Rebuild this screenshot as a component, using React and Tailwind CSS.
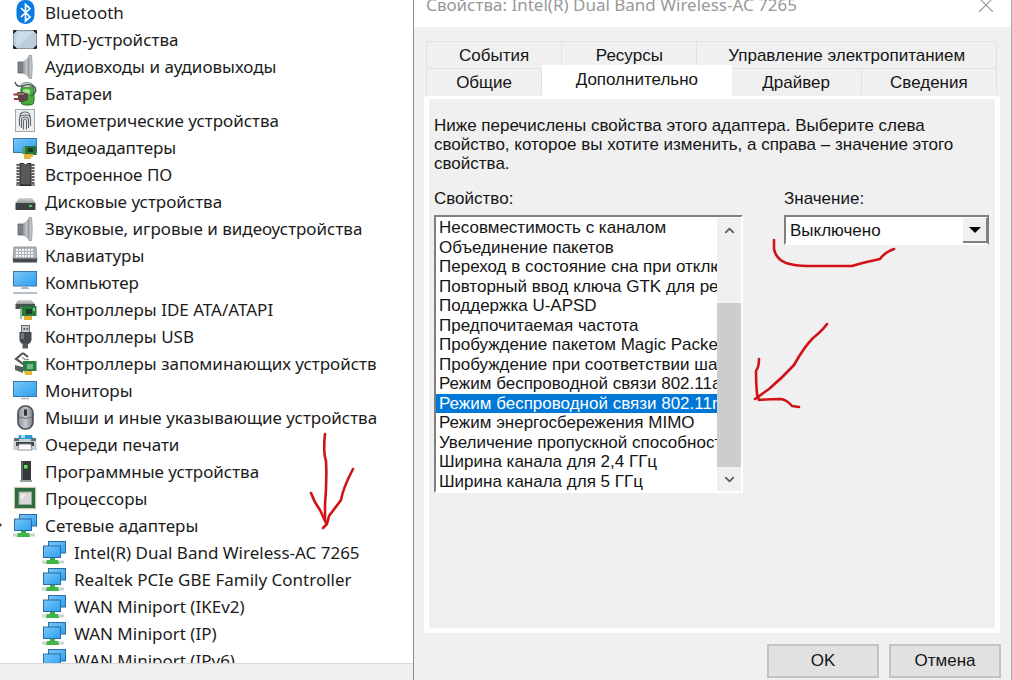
import { useState } from 'react';
import { X, ChevronUp, ChevronDown } from 'lucide-react';

// Shared gradients, referenced by the icons below
function IconDefs() {
  return (
    <svg className="absolute h-0 w-0" aria-hidden="true">
      <defs>
        <linearGradient id="screen" x1="0" y1="0" x2="1" y2="1">
          <stop offset="0" stopColor="#7cc8f7" />
          <stop offset="0.5" stopColor="#52b3f4" />
          <stop offset="1" stopColor="#2f9ff0" />
        </linearGradient>
        <linearGradient id="metal" x1="0" y1="0" x2="1" y2="0">
          <stop offset="0" stopColor="#8d9499" />
          <stop offset="0.5" stopColor="#c3c9cd" />
          <stop offset="1" stopColor="#7b8287" />
        </linearGradient>
        <linearGradient id="drive" x1="0" y1="0" x2="0" y2="1">
          <stop offset="0" stopColor="#d4d6d6" />
          <stop offset="1" stopColor="#999d9d" />
        </linearGradient>
      </defs>
    </svg>
  );
}

function Icon({ children }) {
  return (
    <svg viewBox="0 0 24 24" className="h-6 w-6 shrink-0 overflow-visible" aria-hidden="true">
      {children}
    </svg>
  );
}

function BluetoothIcon() {
  return (
    <Icon>
      <rect x="3.5" y="-1" width="18" height="24" rx="8.5" fill="#0a7be0" />
      <path d="M8 7 L17 16 L12.5 20 V3.5 L17 7.5 L8 16" fill="none" stroke="#fff" strokeWidth="1.7" />
    </Icon>
  );
}

function MtdIcon() {
  return (
    <Icon>
      <rect x="0.5" y="2.5" width="23" height="18" rx="1.5" fill="#bccddb" stroke="#8b969f" />
      <path d="M0.5 2.5 h3 l-3 3z M23.5 2.5 h-3 l3 3z M0.5 20.5 h3 l-3 -3z M23.5 20.5 h-3 l3 -3z" fill="#20282e" stroke="#20282e" />
      <path d="M5 4 H20 L5 18 L3 16 V7z" fill="#cbdbe7" />
    </Icon>
  );
}

function SpeakerIcon() {
  return (
    <Icon>
      <path d="M5 7 h6 v11 H5z" fill="#7c8287" stroke="#5d6266" strokeWidth="0.8" />
      <path d="M10 7 L17 0.5 V23.5 L10 18z" fill="url(#metal)" />
      <path d="M16 0.5 h2.5 q1.5 11 0 23 h-2.5z" fill="#c3c7ca" stroke="#8d9397" strokeWidth="0.8" />
    </Icon>
  );
}

function BatteryIcon() {
  return (
    <Icon>
      <rect x="8" y="3" width="13" height="20" rx="4" fill="#48ad3e" stroke="#276d26" />
      <ellipse cx="14" cy="3" rx="5.5" ry="2.5" fill="#d6dfd5" stroke="#677067" strokeWidth="0.8" />
      <path d="M10 8 q3 -2 7 0 v4 q-4 -2 -7 0z" fill="#a5e397" />
      <path d="M2 0 q1 5 7 4 q8 -3 13 1 q3 5 -4 9" fill="none" stroke="#4c5355" strokeWidth="1.3" />
      <path d="M0.5 12.5 h6 M1 17 h6" stroke="#a8302b" strokeWidth="1.8" />
      <path d="M4 10 h6 l5 2 v6 l-5 2 H6z" fill="#5e4646" />
      <path d="M5 12 h6" stroke="#b1817d" strokeWidth="1.5" />
    </Icon>
  );
}

function FingerprintIcon() {
  return (
    <Icon>
      <rect x="2.5" y="0.5" width="19" height="22" fill="#ecefef" stroke="#a2a8ab" />
      <g fill="none" stroke="#5e6568" strokeWidth="1.1">
        <path d="M7 8 q0 -5 5 -5 q5 0 5 5" />
        <path d="M6.5 17 V10 q0 -4 5.5 -4 q5.5 0 5.5 4 v7" />
        <path d="M8.5 19 V11 q0 -3 3.5 -3 q3.5 0 3.5 3 v8" />
        <path d="M10.5 20.5 V12 q0 -2 1.5 -2 q1.5 0 1.5 2 v8.5" />
      </g>
    </Icon>
  );
}

function DisplayAdapterIcon() {
  return (
    <Icon>
      <rect x="0.5" y="2.5" width="23" height="14" fill="url(#screen)" stroke="#3878a8" />
      <path d="M12 10 h11.5 v9 H12z" fill="#27753b" />
      <path d="M15 12 h5 v4 h-5z" fill="#173e23" />
      <path d="M9 12 l3 -2 v8 h-3z" fill="#5f9c72" />
      <path d="M11 18 h9 v3 h-2 v2 h-7z" fill="#e5b63a" />
    </Icon>
  );
}

function FirmwareIcon() {
  return (
    <Icon>
      <rect x="3" y="0" width="19" height="23" fill="#f0f0f0" />
      <path
        d="M3.5 2 h3 M3.5 5 h3 M3.5 8 h3 M3.5 11 h3 M3.5 14 h3 M3.5 17 h3 M3.5 20 h3 M18.5 2 h3 M18.5 5 h3 M18.5 8 h3 M18.5 11 h3 M18.5 14 h3 M18.5 17 h3 M18.5 20 h3"
        stroke="#2d2d2d"
        strokeWidth="1.5"
      />
      <path d="M7 0.5 h3 q2.5 3 5 0 h3 v22 H7z" fill="#57595a" stroke="#252626" />
      <path d="M3 22 h19" stroke="#2d2d2d" />
    </Icon>
  );
}

function DiskIcon() {
  return (
    <Icon>
      <path d="M6 8 H19 L22.5 13 H2.5z" fill="url(#drive)" />
      <rect x="2.5" y="13" width="20" height="7" rx="0.5" fill="#3c4143" />
      <rect x="16" y="15" width="3" height="2" fill="#45d069" />
    </Icon>
  );
}

function KeyboardIcon() {
  return (
    <Icon>
      <path d="M1 3 H23 L24 16 H0z" fill="#aeb5bb" stroke="#858c92" strokeWidth="0.8" />
      <path d="M3 6 H21 M3 9 H21 M3 12 H21" stroke="#f2f5f6" strokeWidth="1.8" strokeDasharray="2 1" />
      <rect x="0" y="14.5" width="24" height="4" fill="#454b50" />
    </Icon>
  );
}

function ComputerIcon() {
  return (
    <Icon>
      <rect x="0.5" y="0.5" width="23" height="14.5" fill="url(#screen)" stroke="#3878a8" />
      <path d="M9 16 h6 l1.5 2 h-9z" fill="#aeb9c0" />
      <path d="M0 22 H24" stroke="#9fadb8" strokeWidth="1.5" />
    </Icon>
  );
}

function IdeIcon() {
  return (
    <Icon>
      <path d="M5 2 H18 L22 6 H2.5z" fill="url(#drive)" />
      <path d="M2.5 6 H22 V11 H2.5z" fill="#4b5051" />
      <path d="M9 8 h14.5 v10 H9z" fill="#277b3c" />
      <path d="M13 11 h6 v5 h-6z" fill="#1b3e28" />
      <path d="M20 10 h2 v3 h-2z" fill="#84c990" />
      <path d="M8 9 v12" stroke="#78a284" strokeWidth="1.5" />
      <path d="M11 18 h8 v4 h-8z" fill="#e5ae35" />
    </Icon>
  );
}

function UsbIcon() {
  return (
    <Icon>
      <rect x="8.5" y="0.5" width="8" height="8" fill="#c6cacc" stroke="#697174" />
      <path d="M10.5 3 h1.5 v2 h-1.5z M13.5 3 h1.5 v2 h-1.5z" fill="#555" />
      <path d="M6.5 7 h12 v8 q-1 4 -4 4 h-4 q-3 0 -4 -4z" fill="#454a4c" />
      <path d="M8 8 h3 v6 h-3z" fill="#73797b" />
      <path d="M9.5 18.5 h5.5 v5 h-5.5z" fill="#555a5c" />
    </Icon>
  );
}

function StorageIcon() {
  return (
    <Icon>
      <path d="M10 1 l5 4 M10 1 l-7 6 7 5 3 -2" fill="none" stroke="#53595b" strokeWidth="2.2" />
      <path d="M9 5 l3 2.5 h4" fill="none" stroke="#949b9d" strokeWidth="1.5" />
      <path d="M2 13 l8 2 v6 l-8 -3z" fill="#5a6060" />
      <path d="M10 9 h13.5 v10 H10z" fill="#2a8144" />
      <path d="M14 12 h6 v5 h-6z" fill="#78b789" />
      <path d="M11 19 h8 v4 h-7z" fill="#e4b339" />
    </Icon>
  );
}

function MonitorIcon() {
  return (
    <Icon>
      <rect x="0.5" y="2.5" width="23" height="15" fill="url(#screen)" stroke="#3878a8" />
      <path d="M8 19.5 h8" stroke="#aab7c0" strokeWidth="1.5" />
    </Icon>
  );
}

function MouseIcon() {
  return (
    <Icon>
      <rect x="5" y="0" width="15" height="23" rx="7" fill="url(#metal)" stroke="#454e57" strokeWidth="1.6" />
      <path d="M6 11 q6.5 3 13 0" fill="none" stroke="#667079" />
      <rect x="11" y="3" width="3" height="7" rx="1.5" fill="#2e363d" />
    </Icon>
  );
}

function PrinterIcon() {
  return (
    <Icon>
      <path d="M1 5 h22 l1 12 H0z" fill="#c9d0d3" />
      <path d="M1 5 h5 v3 H1z M18 5 h5 v3 h-5z" fill="#626c72" />
      <path d="M6 2 h13 l1 4 H5z" fill="#2a9bd3" />
      <path d="M8 2 h4 v3 H8z" fill="#a6def5" />
      <rect x="3" y="9" width="18" height="4" fill="#3c454b" />
      <path d="M6 11 h12 l1 6 H5z" fill="#fbfbfb" stroke="#777f83" strokeWidth="0.8" />
    </Icon>
  );
}

function SoftwareIcon() {
  return (
    <Icon>
      <rect x="8" y="1" width="10" height="19" fill="#35393b" />
      <path d="M8 1 h2 v19 h-2z" fill="#5e6365" />
      <rect x="11" y="5" width="3.5" height="3.5" fill="#58ee48" />
      <path d="M7 20 h12 v2 H7z" fill="#9c9f9f" />
    </Icon>
  );
}

function CpuIcon() {
  return (
    <Icon>
      <rect x="1.5" y="0.5" width="21" height="21" fill="none" stroke="#9b9358" strokeWidth="1.5" strokeDasharray="1 1" />
      <rect x="2" y="1" width="20" height="20" fill="#2e6b41" />
      <rect x="6" y="5" width="12.5" height="12.5" fill="#d5d8d4" stroke="#96a59a" />
      <path d="M8 7 h5 l-5 6z" fill="#efefed" />
    </Icon>
  );
}

function NetworkIcon() {
  return (
    <Icon>
      <rect x="6.5" y="0.5" width="17" height="11.5" fill="url(#screen)" stroke="#2a6ca0" />
      <rect x="1.5" y="5" width="17" height="11.5" fill="url(#screen)" stroke="#2a6ca0" />
      <path d="M8 17 h5 v2.5 h-5z" fill="#36ad43" />
      <path d="M0 21 h22" stroke="#cdd4cd" strokeWidth="3" />
      <path d="M5 19 h11 l1 4 H4z" fill="#42b548" />
    </Icon>
  );
}

const CATEGORIES = [
  { label: 'Bluetooth', icon: BluetoothIcon },
  { label: 'MTD-устройства', icon: MtdIcon },
  { label: 'Аудиовходы и аудиовыходы', icon: SpeakerIcon },
  { label: 'Батареи', icon: BatteryIcon },
  { label: 'Биометрические устройства', icon: FingerprintIcon },
  { label: 'Видеоадаптеры', icon: DisplayAdapterIcon },
  { label: 'Встроенное ПО', icon: FirmwareIcon },
  { label: 'Дисковые устройства', icon: DiskIcon },
  { label: 'Звуковые, игровые и видеоустройства', icon: SpeakerIcon },
  { label: 'Клавиатуры', icon: KeyboardIcon },
  { label: 'Компьютер', icon: ComputerIcon },
  { label: 'Контроллеры IDE ATA/ATAPI', icon: IdeIcon },
  { label: 'Контроллеры USB', icon: UsbIcon },
  { label: 'Контроллеры запоминающих устройств', icon: StorageIcon },
  { label: 'Мониторы', icon: MonitorIcon },
  { label: 'Мыши и иные указывающие устройства', icon: MouseIcon },
  { label: 'Очереди печати', icon: PrinterIcon },
  { label: 'Программные устройства', icon: SoftwareIcon },
  { label: 'Процессоры', icon: CpuIcon },
  {
    label: 'Сетевые адаптеры',
    icon: NetworkIcon,
    children: [
      'Intel(R) Dual Band Wireless-AC 7265',
      'Realtek PCIe GBE Family Controller',
      'WAN Miniport (IKEv2)',
      'WAN Miniport (IP)',
      'WAN Miniport (IPv6)',
    ],
  },
];

const PROPERTIES = [
  'Несовместимость с каналом',
  'Объединение пакетов',
  'Переход в состояние сна при отключении',
  'Повторный ввод ключа GTK для режима',
  'Поддержка U-APSD',
  'Предпочитаемая частота',
  'Пробуждение пакетом Magic Packet',
  'Пробуждение при соответствии шаблону',
  'Режим беспроводной связи 802.11a',
  'Режим беспроводной связи 802.11n',
  'Режим энергосбережения MIMO',
  'Увеличение пропускной способности',
  'Ширина канала для 2,4 ГГц',
  'Ширина канала для 5 ГГц',
];

function DeviceTree() {
  return (
    <div className="flex min-h-0 min-w-0 flex-col bg-white font-['Noto_Sans',sans-serif] text-[17px] text-[#1c1c1c]">
      <div className="min-h-0 flex-1 overflow-hidden">
        <ul className="-mt-px whitespace-nowrap">
          {CATEGORIES.map(({ label, icon: CategoryIcon, children }) => (
            <li key={label}>
              <div className="flex h-[27px] items-center">
                <div className="w-[13px] shrink-0">
                  {children && (
                    <svg viewBox="0 0 13 6" className="h-[6px] w-[13px]" aria-hidden="true">
                      <path d="M0 0 L2 2 L0 4z" fill="#444" />
                    </svg>
                  )}
                </div>
                <CategoryIcon />
                <span className="pl-2 leading-6">{label}</span>
              </div>
              {children && (
                <ul>
                  {children.map((name) => (
                    <li key={name} className="flex h-[27px] items-center pl-[42px]">
                      <NetworkIcon />
                      <span className="pl-2 leading-6">{name}</span>
                    </li>
                  ))}
                </ul>
              )}
            </li>
          ))}
        </ul>
      </div>
      <div className="h-[17px] shrink-0 border-t border-[#d8d8d8] bg-[#f0f0f0]" />
    </div>
  );
}

function Tab({ label, selected, onSelect }) {
  return (
    <button
      type="button"
      role="tab"
      aria-selected={selected}
      onClick={() => onSelect(label)}
      className={
        selected
          ? 'relative z-10 -mt-[3px] h-[33px] bg-white pb-1'
          : 'h-[27px] border-t border-r border-[#e2e2e2] pt-px'
      }
    >
      {label}
    </button>
  );
}

function PropertyList() {
  const [selected, setSelected] = useState(PROPERTIES[9]);

  return (
    <div className="flex h-[278px] border-2 border-t-[#808080] border-r-white border-b-white border-l-[#808080] bg-white pt-px">
      <div role="listbox" aria-labelledby="property-label" className="flex min-w-0 flex-1 flex-col">
        {PROPERTIES.map((name) => (
          <button
            key={name}
            type="button"
            role="option"
            aria-selected={name === selected}
            onClick={() => setSelected(name)}
            className={`flex min-h-0 flex-1 items-center overflow-hidden pl-[3px] text-left whitespace-nowrap ${
              name === selected ? 'bg-[#0078d7] text-white' : ''
            }`}
          >
            {name}
          </button>
        ))}
      </div>
      <div className="flex w-6 shrink-0 flex-col bg-[#f0f0f0] text-[#606060]">
        <button type="button" aria-label="Вверх" className="flex h-6 items-center justify-center">
          <ChevronUp size={15} strokeWidth={3} />
        </button>
        <div className="flex flex-1 flex-col justify-end">
          <div className="h-[164px] bg-[#cdcdcd]" />
        </div>
        <button type="button" aria-label="Вниз" className="flex h-6 items-center justify-center">
          <ChevronDown size={15} strokeWidth={3} />
        </button>
      </div>
    </div>
  );
}

function PropertiesDialog() {
  const [tab, setTab] = useState('Дополнительно');

  return (
    <div className="flex min-h-0 min-w-0 flex-col border-x border-r-[#a8a8a8] border-l-[#8c8c8c] bg-[#f0f0f0] font-['Liberation_Sans',sans-serif] text-[17px] text-[#151515]">
      <header className="flex h-[27px] shrink-0 items-end justify-between overflow-hidden bg-white px-3 font-['Noto_Sans',sans-serif] text-[#999]">
        <h1 className="flex h-11 shrink-0 items-center whitespace-nowrap">
          Свойства: Intel(R) Dual Band Wireless-AC 7265
        </h1>
        <button type="button" aria-label="Закрыть" className="flex h-11 shrink-0 items-center">
          <X size={26} strokeWidth={1} />
        </button>
      </header>

      <div className="flex min-h-0 flex-1 flex-col px-[10px] pt-[14px]">
        <div role="tablist" className="mr-1 ml-[2px] border-l border-[#e2e2e2]">
          <div className="grid grid-cols-[135fr_135fr_299fr]">
            <Tab label="События" selected={tab === 'События'} onSelect={setTab} />
            <Tab label="Ресурсы" selected={tab === 'Ресурсы'} onSelect={setTab} />
            <Tab label="Управление электропитанием" selected={tab === 'Управление электропитанием'} onSelect={setTab} />
          </div>
          <div className="grid h-[28px] grid-cols-[115fr_189fr_130fr_135fr]">
            <Tab label="Общие" selected={tab === 'Общие'} onSelect={setTab} />
            <Tab label="Дополнительно" selected={tab === 'Дополнительно'} onSelect={setTab} />
            <Tab label="Драйвер" selected={tab === 'Драйвер'} onSelect={setTab} />
            <Tab label="Сведения" selected={tab === 'Сведения'} onSelect={setTab} />
          </div>
        </div>

        <section className="mr-px min-h-0 flex-1 border-5 border-t-3 border-white pt-[17px] pr-[6px] pl-[5px]">
          <p className="max-w-[530px] leading-[19px]">
            Ниже перечислены свойства этого адаптера. Выберите слева свойство, которое вы хотите изменить, а справа – значение этого свойства.
          </p>
          <div className="mt-4 flex justify-between">
            <div className="w-[309px]">
              <div id="property-label" className="mb-[7px] leading-[19px]">
                Свойство:
              </div>
              <PropertyList />
            </div>
            <div className="w-[205px]">
              <label htmlFor="value" className="mb-[7px] block leading-[19px]">
                Значение:
              </label>
              <div className="relative">
                <select
                  id="value"
                  className="block h-[30px] w-full appearance-none border-2 border-t-[#808080] border-r-[#808080] border-b-white border-l-[#808080] bg-white pt-px pl-1"
                >
                  <option>Выключено</option>
                  <option>Включено</option>
                </select>
                <span className="pointer-events-none absolute top-[3px] right-px flex h-[25px] w-[25px] items-center justify-center border-r-2 border-b-2 border-[#808080] bg-[#f0f0f0]">
                  <svg viewBox="0 0 12 6" className="h-[6px] w-3" aria-hidden="true">
                    <path d="M0 0 H12 L6 6z" fill="#000" />
                  </svg>
                </span>
              </div>
            </div>
          </div>
        </section>

        <footer className="flex shrink-0 justify-end gap-[10px] pt-[11px] pb-[2px]">
          <button type="button" className="h-[34px] w-28 border-2 border-[#c3c3c3] bg-[#e1e1e1]">
            OK
          </button>
          <button type="button" className="h-[34px] w-28 border-2 border-[#c3c3c3] bg-[#e1e1e1]">
            Отмена
          </button>
        </footer>
      </div>
    </div>
  );
}

// Hand-drawn red marks
function Marks() {
  return (
    <svg
      viewBox="0 0 1012 680"
      className="pointer-events-none absolute top-0 left-0 z-20 h-[680px] w-[1012px]"
      fill="none"
      stroke="#d01318"
      strokeWidth="2.6"
      strokeLinecap="round"
      strokeLinejoin="round"
      aria-hidden="true"
    >
      <path d="M774 240 L774 249 Q776 259 786 263 Q795 266 808 266 H852 Q861 263 880 259 Q885 252 894 249" />
      <path d="M827 324 Q822 331 813 338 Q804 347 794 365 Q782 378 769 389 Q762 394 755 399" />
      <path d="M759 359 Q759 367 756 371 Q756 384 757 394 L759 400 Q768 399 781 399 Q787 400 792 406 L799 407" />
      <path d="M325 434 Q323 452 326 461 Q327 480 325 505 V520" />
      <path d="M311 493 Q314 502 320 510 L326 523 M353 469 Q343 488 341 500 L329 516 L327 524 L323 528" />
    </svg>
  );
}

export default function App() {
  return (
    <div className="relative grid h-screen grid-cols-[413fr_599fr] grid-rows-[minmax(0,1fr)] overflow-hidden bg-white">
      <IconDefs />
      <DeviceTree />
      <PropertiesDialog />
      <Marks />
    </div>
  );
}
